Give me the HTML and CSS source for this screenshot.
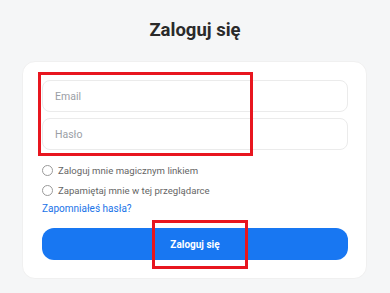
FILE: index.html
```html
<!DOCTYPE html>
<html lang="pl">
<head>
    <meta charset="UTF-8">
    <meta name="viewport" content="width=device-width, initial-scale=1.0">
    <title>Zaloguj się</title>
    <link rel="stylesheet" href="styles.css">
</head>
<body>
    <div class="page">
        <h1>Zaloguj się</h1>

        <form class="card" onsubmit="return false">
            <div class="fields">
                <input type="email" class="field" placeholder="Email">
                <input type="password" class="field" placeholder="Hasło">
            </div>

            <div class="options">
                <label class="option"><span class="radio"></span>Zaloguj mnie magicznym linkiem</label>
                <label class="option"><span class="radio"></span>Zapamiętaj mnie w tej przeglądarce</label>
                <a href="#" class="forgot">Zapomniałeś hasła?</a>
            </div>

            <button type="submit" class="btn-login">Zaloguj się</button>
        </form>
    </div>

    <!-- review markers -->
    <div class="mark mark-fields"></div>
    <div class="mark mark-button"></div>
</body>
</html>
```

FILE: styles.css
```css
body {
    font-family: Roboto, "Noto Sans", Arial, sans-serif;
    background-color: #f5f6f7;
    color: #2b2b2b;
    margin: 0;
    position: relative;
    min-height: 293px;
}
.page {
    padding-top: 19px;
}
h1 {
    margin: 0 0 20px;
    font-size: 18.5px;
    line-height: 22px;
    font-weight: 700;
    text-align: center;
    color: #2a2a2a;
}
.card {
    margin: 0 23px 0 22px;
    padding: 18px 18px 18px 19px;
    background-color: #fff;
    border: 1px solid #f0f0f0;
    border-radius: 13px;
    display: flex;
    flex-direction: column;
}
.fields {
    display: flex;
    flex-direction: column;
    gap: 6px;
}
.field {
    height: 32px;
    box-sizing: border-box;
    padding: 0 12px;
    border: 1px solid #ebebeb;
    border-radius: 8px;
    font-family: inherit;
    font-size: 10.5px;
    color: #333;
    outline: none;
}
.field::placeholder { color: #9a9ea5; }
.options {
    margin-top: 12px;
    display: flex;
    flex-direction: column;
    gap: 4px;
}
.option {
    display: flex;
    align-items: center;
    gap: 5px;
    height: 16px;
    font-size: 9.6px;
    color: #666;
}
.radio {
    width: 11px;
    height: 11px;
    box-sizing: border-box;
    border: 1px solid #9a9a9a;
    border-radius: 50%;
}
.forgot {
    margin-top: -1px;
    line-height: 16px;
    font-size: 10px;
    color: #1a73e8;
    text-decoration: none;
}
.btn-login {
    margin-top: 11px;
    height: 32px;
    border: none;
    border-radius: 12px;
    background-color: #1877f2;
    color: #fff;
    font-family: inherit;
    font-size: 10px;
    font-weight: 700;
    cursor: pointer;
}
.mark {
    position: absolute;
    box-sizing: border-box;
    border: 3px solid #e8161f;
}
.mark-fields {
    left: 38px;
    top: 72px;
    width: 215px;
    height: 84px;
}
.mark-button {
    left: 152px;
    top: 220px;
    width: 96px;
    height: 49px;
}
```
